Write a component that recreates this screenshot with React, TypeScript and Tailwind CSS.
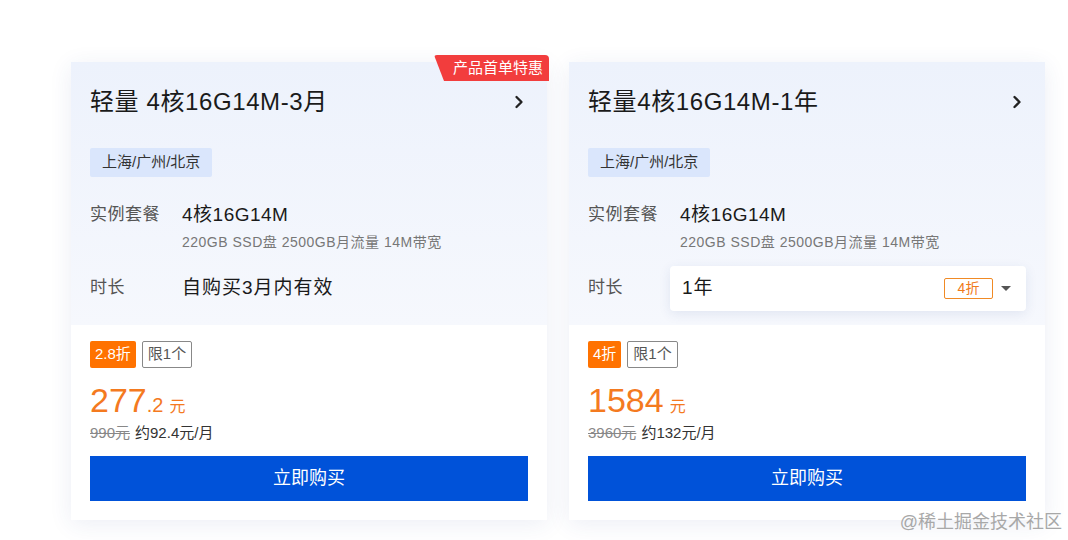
import { ChevronRight } from "lucide-react";

type Plan = {
  title: string;
  spec: string;
  detail: string;
  duration: string;
  selectable: boolean;
  discount: string;
  price: string;
  decimal?: string;
  original: string;
  monthly: string;
  promo?: boolean;
};

const plans: Plan[] = [
  {
    title: "轻量 4核16G14M-3月",
    spec: "4核16G14M",
    detail: "220GB SSD盘 2500GB月流量 14M带宽",
    duration: "自购买3月内有效",
    selectable: false,
    discount: "2.8折",
    price: "277",
    decimal: ".2",
    original: "990元",
    monthly: "约92.4元/月",
    promo: true,
  },
  {
    title: "轻量4核16G14M-1年",
    spec: "4核16G14M",
    detail: "220GB SSD盘 2500GB月流量 14M带宽",
    duration: "1年",
    selectable: true,
    discount: "4折",
    price: "1584",
    original: "3960元",
    monthly: "约132元/月",
  },
];

function PlanCard({ plan }: { plan: Plan }) {
  return (
    <div className="relative w-[476px] bg-white shadow-[0_4px_22px_rgba(40,70,140,0.09)]">
      {plan.promo && (
        <div className="absolute -top-[7px] -right-[2px] h-[26px] pl-[19px] pr-[6px] flex items-center rounded-tr-[4px] rounded-tl-[3px] bg-[#f23d3d] text-white text-[15px] [clip-path:polygon(0_0,100%_0,100%_100%,10px_100%)]">
          产品首单特惠
        </div>
      )}
      <div className="px-[19px] pt-[24px] pb-[14px] bg-gradient-to-b from-[#edf2fc] to-[#f6f8fd]">
        <div className="flex items-center justify-between h-[32px]">
          <span className="text-[24px] tracking-[0.6px] text-[#1a1a1a]">{plan.title}</span>
          <ChevronRight size={20} strokeWidth={2.8} className="text-[#222] mr-[-1px]" />
        </div>
        <div className="mt-[30px] inline-flex h-[29px] items-center px-[12px] rounded-[2px] bg-[#dae6fc] text-[15px] text-[#333]">
          上海/广州/北京
        </div>
        <div className="mt-[26px] flex">
          <span className="w-[92px] text-[17px] tracking-[0.5px] leading-[24px] text-[#555]">实例套餐</span>
          <div>
            <div className="text-[19px] tracking-[0.5px] leading-[24px] text-[#1a1a1a]">{plan.spec}</div>
            <div className="mt-[5px] text-[14px] tracking-[0.5px] leading-[20px] text-[#777]">{plan.detail}</div>
          </div>
        </div>
        <div className="mt-[13px] flex items-center h-[46px]">
          <span className="w-[92px] text-[17px] tracking-[0.5px] leading-[24px] text-[#555]">时长</span>
          {plan.selectable ? (
            <div className="-ml-[10px] flex-1 h-[45px] flex items-center pl-[12px] pr-[15px] bg-white rounded-[4px] shadow-[0_3px_12px_rgba(40,70,140,0.1)]">
              <span className="text-[19px] tracking-[1px] text-[#1a1a1a] flex-1">{plan.duration}</span>
              <span className="h-[21px] w-[49px] flex items-center justify-center border border-[#f08a25] rounded-[2px] text-[14px] text-[#f07a1a]">
                {plan.discount}
              </span>
              <span className="ml-[8px] w-0 h-0 border-l-[5px] border-r-[5px] border-t-[5px] border-l-transparent border-r-transparent border-t-[#555]" />
            </div>
          ) : (
            <span className="text-[19px] tracking-[1px] text-[#1a1a1a]">{plan.duration}</span>
          )}
        </div>
      </div>
      <div className="px-[19px] pt-[16px] pb-[19px]">
        <div className="flex gap-[6px] h-[27px]">
          <span className="px-[5px] flex items-center rounded-[2px] bg-[#ff7200] text-white text-[15px]">
            {plan.discount}
          </span>
          <span className="px-[5px] flex items-center rounded-[2px] border border-[#888] text-[#555] text-[15px]">
            限1个
          </span>
        </div>
        <div className="mt-[10px] flex items-baseline text-[#f47a1f] leading-[44px] h-[44px]">
          <span className="text-[34px]">{plan.price}</span>
          {plan.decimal && <span className="text-[20px]">{plan.decimal}</span>}
          <span className="ml-[6px] text-[16px]">元</span>
        </div>
        <div className="mt-[1px] text-[15px] leading-[20px]">
          <span className="line-through text-[#888]">{plan.original}</span>
          <span className="ml-[5px] text-[#333]">{plan.monthly}</span>
        </div>
        <button className="mt-[13px] w-full h-[45px] bg-[#0052d9] text-white text-[18px]">立即购买</button>
      </div>
    </div>
  );
}

export default function App() {
  return (
    <div
      className="relative w-[1068px] h-[540px] bg-white overflow-hidden"
      style={{ fontFamily: '"Liberation Sans", "Noto Sans CJK SC", sans-serif' }}
    >
      <div className="flex gap-[22px] pl-[71px] pt-[62px]">
        {plans.map((p) => (
          <PlanCard key={p.title} plan={p} />
        ))}
      </div>
      <div className="absolute right-[6px] bottom-[4px] text-[18px] text-[#a8a8a8]">@稀土掘金技术社区</div>
    </div>
  );
}
